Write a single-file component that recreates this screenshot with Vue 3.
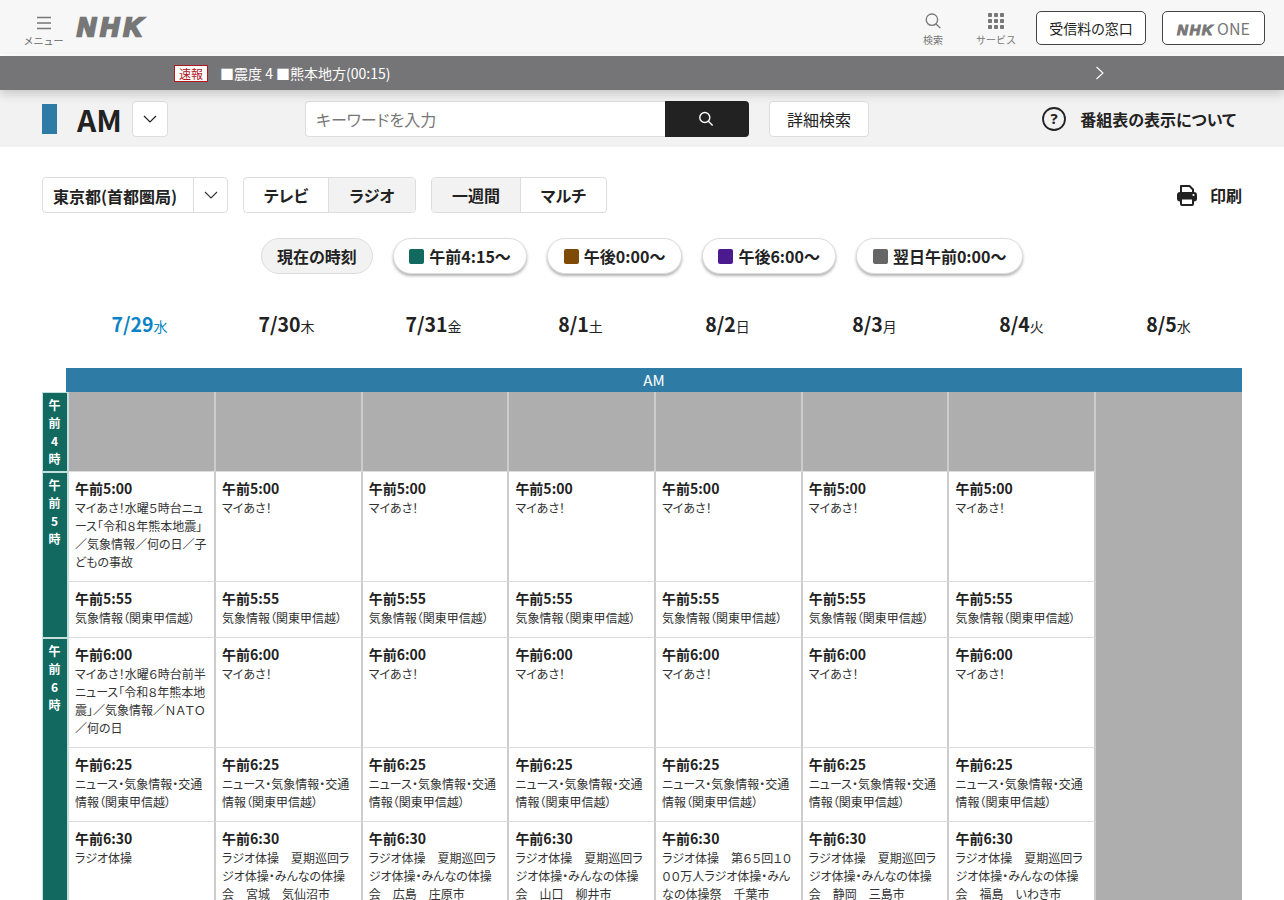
<script setup>
const days = [
	{ date: "7/29", wd: "水", today: true },
	{ date: "7/30", wd: "木" },
	{ date: "7/31", wd: "金" },
	{ date: "8/1", wd: "土" },
	{ date: "8/2", wd: "日" },
	{ date: "8/3", wd: "月" },
	{ date: "8/4", wd: "火" },
	{ date: "8/5", wd: "水" },
]

const jumps = [
	{ label: "午前4:15〜", color: "#12695f" },
	{ label: "午後0:00〜", color: "#7f4a06" },
	{ label: "午後6:00〜", color: "#4b1a8e" },
	{ label: "翌日午前0:00〜", color: "#666666" },
]

const hours = [
	{ chars: ["午", "前", "4", "時"], row: "1 / span 1" },
	{ chars: ["午", "前", "5", "時"], row: "2 / span 2" },
	{ chars: ["午", "前", "6", "時"], row: "4 / span 3" },
]

const taiso = "ラジオ体操　夏期巡回ラジオ体操・みんなの体操会　"
const rows = [
	{
		time: "午前5:00",
		titles: ["マイあさ！水曜５時台ニュース「令和８年熊本地震」／気象情報／何の日／子どもの事故", "マイあさ！", "マイあさ！", "マイあさ！", "マイあさ！", "マイあさ！", "マイあさ！"],
	},
	{ time: "午前5:55", titles: Array(7).fill("気象情報（関東甲信越）") },
	{
		time: "午前6:00",
		titles: ["マイあさ！水曜６時台前半ニュース「令和８年熊本地震」／気象情報／ＮＡＴＯ／何の日", "マイあさ！", "マイあさ！", "マイあさ！", "マイあさ！", "マイあさ！", "マイあさ！"],
	},
	{ time: "午前6:25", titles: Array(7).fill("ニュース・気象情報・交通情報（関東甲信越）") },
	{
		time: "午前6:30",
		titles: [
			"ラジオ体操",
			taiso + "宮城　気仙沼市",
			taiso + "広島　庄原市",
			taiso + "山口　柳井市",
			"ラジオ体操　第６５回１０００万人ラジオ体操・みんなの体操祭　千葉市",
			taiso + "静岡　三島市",
			taiso + "福島　いわき市",
		],
	},
]
</script>

<template>
	<div class="page">
		<header class="header">
			<div class="menu">
				<svg width="16" height="14" viewBox="0 0 16 14" fill="none" stroke="#777" stroke-width="1.3">
					<path d="M1 1.5h14M1 7h14M1 12.5h14" />
				</svg>
				<span>メニュー</span>
			</div>
			<div class="logo">NHK</div>
			<div class="header_right">
				<div class="tool tool_search">
					<svg width="16" height="16" viewBox="0 0 18 18" fill="none" stroke="#777" stroke-width="1.5">
						<circle cx="7.8" cy="7.5" r="6.4" />
						<path d="M12.2 12l5 5" />
					</svg>
					<span>検索</span>
				</div>
				<div class="tool tool_service">
					<svg width="16" height="16" viewBox="0 0 16 16" fill="#777">
						<g v-for="y in [0, 6, 12]" :key="y">
							<rect v-for="x in [0, 6, 12]" :key="x" :x="x" :y="y" width="4" height="4" rx="0.8" />
						</g>
					</svg>
					<span>サービス</span>
				</div>
				<button class="head_btn head_btn_fee">受信料の窓口</button>
				<button class="head_btn head_btn_one"><b>NHK</b>ONE</button>
			</div>
		</header>

		<div class="breaking">
			<span class="breaking_tag">速報</span>
			<span class="breaking_text">■震度 4 ■熊本地方(00:15)</span>
			<svg class="breaking_arrow" width="10" height="14" viewBox="0 0 10 14" fill="none" stroke="#fff" stroke-width="1.1">
				<path d="M1.5 1l6.5 6-6.5 6" />
			</svg>
		</div>

		<div class="subbar">
			<i class="ch_mark"></i>
			<span class="ch_name">AM</span>
			<button class="ch_select">
				<svg width="14" height="8" viewBox="0 0 14 8" fill="none" stroke="#222" stroke-width="1.2">
					<path d="M1 1l6 6 6-6" />
				</svg>
			</button>
			<div class="search">
				<span class="search_input">キーワードを入力</span>
				<span class="search_btn">
					<svg width="16" height="16" viewBox="0 0 16 16" fill="none" stroke="#fff" stroke-width="1.4">
						<circle cx="6.8" cy="6.5" r="5" />
						<path d="M10.4 10.2l4.2 4.2" />
					</svg>
				</span>
			</div>
			<button class="detail_btn">詳細検索</button>
			<div class="about">
				<svg width="24" height="24" viewBox="0 0 24 24" fill="none">
					<circle cx="12" cy="12" r="11" stroke="#222" stroke-width="1.8" />
					<text x="12" y="17" text-anchor="middle" class="about_q">?</text>
				</svg>
				<span>番組表の表示について</span>
			</div>
		</div>

		<main class="main">
			<div class="controls">
				<div class="area">
					<span class="area_name">東京都(首都圏局)</span>
					<span class="area_arrow">
						<svg width="14" height="8" viewBox="0 0 14 8" fill="none" stroke="#333" stroke-width="1.1">
							<path d="M1 1l6 6 6-6" />
						</svg>
					</span>
				</div>
				<div class="seg">
					<span class="seg_item seg_tv">テレビ</span>
					<span class="seg_item seg_on seg_radio">ラジオ</span>
				</div>
				<div class="seg">
					<span class="seg_item seg_on seg_week">一週間</span>
					<span class="seg_item seg_multi">マルチ</span>
				</div>
				<div class="print">
					<svg width="22" height="22" viewBox="0 0 22 22">
						<path d="M5 9V2h8.5L17 5.5V9" fill="#fff" stroke="#222" stroke-width="2" stroke-linejoin="round" />
						<rect x="1" y="8" width="20" height="9.5" rx="3" fill="#222" />
						<circle cx="17.5" cy="11" r="1.1" fill="#fff" />
						<rect x="5" y="14.5" width="12" height="6.5" rx="1" fill="#fff" stroke="#222" stroke-width="2" />
					</svg>
					<span>印刷</span>
				</div>
			</div>

			<div class="jumps">
				<span class="pill pill_now">現在の時刻</span>
				<span v-for="j in jumps" :key="j.label" class="pill">
					<i class="swatch" :style="{ background: j.color }"></i>{{ j.label }}
				</span>
			</div>

			<div class="dates">
				<div v-for="d in days" :key="d.date + d.wd" class="date" :class="{ today: d.today }">
					<b>{{ d.date }}</b><span>{{ d.wd }}</span>
				</div>
			</div>

			<div class="am_bar">AM</div>

			<div class="grid">
				<div v-for="h in hours" :key="h.row" class="hour" :style="{ gridRow: h.row }">
					<span v-for="(c, i) in h.chars" :key="i">{{ c }}</span>
				</div>
				<div v-for="n in 7" :key="n" class="empty"></div>
				<div class="closed"></div>
				<template v-for="r in rows" :key="r.time">
					<div v-for="(t, i) in r.titles" :key="i" class="cell">
						<div class="cell_time">{{ r.time }}</div>
						<div class="cell_title">{{ t }}</div>
					</div>
				</template>
			</div>
		</main>
	</div>
</template>

<style scoped>
.page {
	height: 900px;
	overflow: hidden;
	background: #fff;
	color: #222;
	font-family: "Noto Sans CJK JP", "Noto Sans", sans-serif;
	font-feature-settings: "palt";
}

button {
	font-family: inherit;
	font-feature-settings: inherit;
	cursor: pointer;
}

/* header */
.header {
	display: flex;
	align-items: center;
	height: 55px;
	box-sizing: border-box;
	padding: 0 19px 0 24px;
	background: #f7f7f7;
	border-bottom: 1px solid #fff;
}

.menu {
	display: flex;
	flex-direction: column;
	align-items: center;
	gap: 5px;
	width: 39px;
	padding-top: 8px;
	font-size: 10px;
	font-feature-settings: normal;
	line-height: 12px;
	white-space: nowrap;
	color: #666;
}

.logo {
	margin-left: 14px;
	font-family: "Liberation Sans", sans-serif;
	font-size: 26px;
	font-weight: 700;
	font-style: italic;
	letter-spacing: 4.5px;
	line-height: 28px;
	color: #777;
	-webkit-text-stroke: 2.4px #777;
}

.header_right {
	display: flex;
	align-items: center;
	margin-left: auto;
}

.tool {
	display: flex;
	flex-direction: column;
	align-items: center;
	gap: 5px;
	font-size: 10px;
	font-feature-settings: normal;
	line-height: 12px;
	color: #777;
	padding-top: 4px;
}

.tool_search {
	margin-right: 33px;
}

.tool_service {
	margin-right: 20px;
}

.head_btn {
	height: 34px;
	box-sizing: border-box;
	margin-top: 2px;
	padding: 0;
	background: #fff;
	border: 1px solid #444;
	border-radius: 5px;
	font-size: 14px;
	color: #222;
}

.head_btn_fee {
	width: 110px;
}

.head_btn_one {
	width: 103px;
	margin-left: 16px;
	font-size: 16px;
	color: #777;
}

.head_btn_one b {
	margin-right: 3px;
	font-family: "Liberation Sans", sans-serif;
	font-style: italic;
	font-weight: 700;
	font-size: 15px;
	letter-spacing: 1.5px;
	-webkit-text-stroke: 1px #777;
}

/* breaking news */
.breaking {
	position: relative;
	z-index: 1;
	display: flex;
	align-items: center;
	height: 34px;
	margin-top: 1px;
	padding-left: 174px;
	background: #757577;
	color: #fff;
	box-shadow: 0 4px 10px rgba(0, 0, 0, 0.18);
}

.breaking_tag {
	width: 34px;
	height: 17px;
	box-sizing: border-box;
	background: #fff;
	border: 1px solid #b0171f;
	color: #b0171f;
	font-size: 12px;
	line-height: 15px;
	text-align: center;
}

.breaking_text {
	margin-left: 12px;
	padding-bottom: 1px;
	font-size: 14px;
	font-feature-settings: normal;
}

.breaking_arrow {
	position: absolute;
	left: 1095px;
	top: 10px;
}

/* channel bar */
.subbar {
	display: flex;
	align-items: center;
	height: 57px;
	padding: 0 48px 0 42px;
	background: #f2f2f2;
}

.ch_mark {
	width: 15px;
	height: 30px;
	background: #2e7ba6;
}

.ch_name {
	width: 45px;
	margin-left: 20px;
	font-size: 30px;
	font-weight: 700;
	line-height: 36px;
	color: #222;
}

.ch_select {
	display: flex;
	align-items: center;
	justify-content: center;
	width: 36px;
	height: 36px;
	margin-left: 10px;
	padding: 0;
	background: #fff;
	border: 1px solid #ddd;
	border-radius: 4px;
}

.search {
	display: flex;
	width: 444px;
	height: 36px;
	margin-left: 137px;
}

.search_input {
	flex: 1;
	box-sizing: border-box;
	padding-left: 10px;
	background: #fff;
	border: 1px solid #ddd;
	border-right: none;
	border-radius: 4px 0 0 4px;
	font-size: 16px;
	line-height: 35px;
	color: #777;
}

.search_btn {
	display: flex;
	align-items: center;
	justify-content: center;
	width: 84px;
	padding-right: 2px;
	box-sizing: border-box;
	background: #222;
	border-radius: 0 4px 4px 0;
}

.detail_btn {
	width: 100px;
	height: 36px;
	margin-left: 20px;
	padding: 0;
	background: #fff;
	border: 1px solid #ddd;
	border-radius: 4px;
	font-size: 16px;
	color: #222;
}

.about {
	display: flex;
	align-items: center;
	gap: 14px;
	margin-left: auto;
	font-size: 16px;
	font-weight: 700;
}

.about_q {
	font-family: "Noto Sans", sans-serif;
	font-size: 15px;
	font-weight: 700;
	fill: #222;
}

/* controls */
.main {
	padding: 30px 42px 0;
}

.controls {
	display: flex;
	align-items: center;
	height: 36px;
}

.area {
	display: flex;
	width: 186px;
	height: 36px;
	box-sizing: border-box;
	border: 1px solid #ddd;
	border-radius: 4px;
}

.area_name {
	flex: 1;
	padding-left: 10px;
	font-size: 16px;
	font-weight: 700;
	line-height: 37px;
}

.area_arrow {
	display: flex;
	align-items: center;
	justify-content: center;
	width: 33px;
	border-left: 1px solid #ddd;
}

.seg {
	display: flex;
	height: 36px;
	box-sizing: border-box;
	margin-left: 15px;
	border: 1px solid #ddd;
	border-radius: 4px;
	overflow: hidden;
}

.seg_item {
	font-size: 16px;
	font-weight: 700;
	line-height: 34px;
	text-align: center;
}

.seg_item + .seg_item {
	border-left: 1px solid #ddd;
}

.seg_on {
	background: #f2f2f2;
}

.seg_tv {
	width: 84px;
}

.seg_radio {
	width: 86px;
}

.seg_week {
	width: 88px;
}

.seg_multi {
	width: 85px;
}

.print {
	display: flex;
	align-items: center;
	gap: 12px;
	margin-left: auto;
	font-size: 16px;
	font-weight: 700;
}

/* time jumps */
.jumps {
	display: flex;
	justify-content: center;
	gap: 20px;
	margin-top: 25px;
}

.pill {
	display: flex;
	align-items: center;
	height: 36px;
	box-sizing: border-box;
	padding: 0 15.5px;
	background: #fff;
	border: 1px solid #ddd;
	border-radius: 18px;
	box-shadow: 0 2px 3px rgba(0, 0, 0, 0.3);
	font-size: 16px;
	font-weight: 700;
}

.pill_now {
	padding: 0 15px;
	background: #f2f2f2;
	box-shadow: none;
}

.swatch {
	width: 15px;
	height: 15px;
	margin-right: 5px;
	border-radius: 2px;
}

/* date header */
.dates {
	display: grid;
	grid-template-columns: repeat(8, 1fr);
	height: 36px;
	margin: 32px 0 0 24px;
}

.date {
	text-align: center;
	line-height: 36px;
	color: #222;
}

.date b {
	font-size: 19.5px;
}

.date span {
	font-size: 14px;
}

.today {
	color: #0a84c6;
}

/* schedule */
.am_bar {
	height: 24px;
	margin: 26px 0 0 24px;
	background: #2e7ba6;
	color: #fff;
	font-size: 15px;
	font-feature-settings: normal;
	line-height: 24px;
	text-align: center;
}

.grid {
	display: grid;
	grid-template-columns: 27px 147px repeat(6, 146.7px) 1fr;
	grid-template-rows: 80px 110px 56px 110px 74px 110px;
}

.hour {
	grid-column: 1;
	display: flex;
	flex-direction: column;
	align-items: center;
	box-sizing: border-box;
	padding: 3px 1px 0 0;
	background: #12695f;
	border: 1px solid #c5dfdc;
	border-right-width: 2px;
	color: #fff;
	font-size: 12px;
	font-weight: 700;
	line-height: 18px;
}

.empty {
	grid-row: 1;
	box-sizing: border-box;
	background: #aeaeae;
	border-right: 2px solid #ccc;
	border-bottom: 1px solid #ddd;
}

.closed {
	grid-column: 9;
	grid-row: 1 / span 6;
	background: #aeaeae;
}

.cell {
	box-sizing: border-box;
	min-width: 0;
	padding: 6px 6px 0;
	background: #fff;
	border-right: 2px solid #ccc;
	border-bottom: 1px solid #ddd;
}

.cell_time {
	font-size: 14px;
	font-weight: 700;
	line-height: 21px;
}

.cell_title {
	font-size: 12px;
	line-height: 18px;
	color: #333;
	word-break: break-all;
}
</style>

<style>
html,
body {
	margin: 0;
	overflow: hidden;
}
</style>
